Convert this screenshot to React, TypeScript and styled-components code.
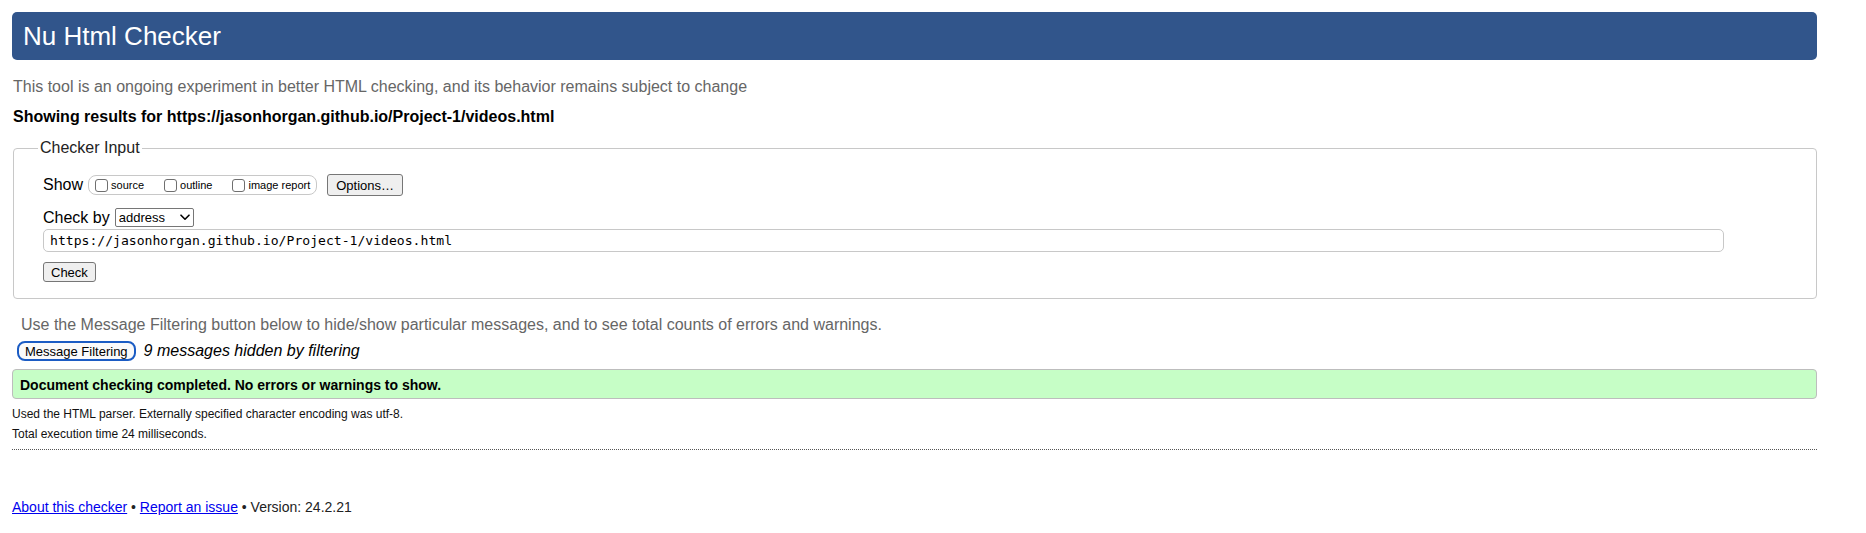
import React from "react";
import styled, { createGlobalStyle } from "styled-components";

const GlobalStyle = createGlobalStyle`
    html, body {
        margin: 0;
        padding: 0;
        background: #ffffff;
    }
    body {
        font-family: "Liberation Sans", Arial, Helvetica, sans-serif;
        color: #000;
    }
`;

const Page = styled.div`
    margin: 0 49px 0 12px;
    padding-top: 12px;
`;

const Title = styled.h1`
    margin: 0;
    height: 48px;
    padding: 0 11px;
    background-color: #31558b;
    color: #ffffff;
    border-radius: 5px;
    font-size: 26px;
    font-weight: normal;
    line-height: 48px;
`;

const Intro = styled.p`
    margin: 17px 0 0 1px;
    font-size: 16px;
    line-height: 20px;
    color: #666666;
`;

const Results = styled.p`
    margin: 10px 0 0 1px;
    font-size: 16px;
    font-weight: bold;
    line-height: 20px;
`;

const InputSet = styled.fieldset`
    margin: 12px 0 0 1px;
    padding: 0 0 16px 29px;
    border: 1px solid #c8c8c8;
    border-radius: 4px;
    min-width: 0;
`;

const Legend = styled.legend`
    margin-left: -5px;
    padding: 0 2px;
    font-size: 16px;
    line-height: 18px;
    color: #222222;
`;

const Row = styled.div<{ $top: number; $height: number }>`
    display: flex;
    align-items: center;
    margin-top: ${(p) => p.$top}px;
    height: ${(p) => p.$height}px;
`;

const Label = styled.span`
    font-size: 16px;
    margin-right: 5px;
`;

const OptionGroup = styled.div`
    display: flex;
    align-items: center;
    gap: 20px;
    height: 18px;
    padding: 0 6px;
    border: 1px solid #c8c8c8;
    border-radius: 8px;
    margin-right: 10px;
`;

const Option = styled.label`
    display: flex;
    align-items: center;
    gap: 3px;
    font-size: 11px;
    color: #000;
`;

const Box = styled.input`
    appearance: none;
    margin: 0;
    width: 13px;
    height: 13px;
    border: 1px solid #6f6f6f;
    border-radius: 3px;
    background: #fff;
    box-sizing: border-box;
`;

const Button = styled.button<{ $height: number; $pad: number }>`
    height: ${(p) => p.$height}px;
    padding: 0 ${(p) => p.$pad}px;
    font-family: "Liberation Sans", Arial, sans-serif;
    font-size: 13px;
    color: #000;
    background: #efefef;
    border: 1px solid #767676;
    border-radius: 3px;
`;

const SelectWrap = styled.div`
    position: relative;
    width: 79px;
    height: 19px;
`;

const Select = styled.select`
    appearance: none;
    width: 100%;
    height: 100%;
    margin: 0;
    padding: 0 0 0 3px;
    font-family: "Liberation Sans", Arial, sans-serif;
    font-size: 13px;
    color: #000;
    background: #fff;
    border: 1px solid #767676;
    border-radius: 2px;
`;

const Chevron = styled.svg`
    position: absolute;
    right: 4px;
    top: 6px;
    pointer-events: none;
`;

const UrlInput = styled.input`
    display: block;
    box-sizing: border-box;
    width: 1681px;
    height: 23px;
    margin: 2px 0 0;
    padding: 0 6px;
    font-family: "DejaVu Sans Mono", "Liberation Mono", monospace;
    font-size: 13.1px;
    color: #000;
    border: 1px solid #c8c8c8;
    border-radius: 5px;
`;

const CheckRow = styled.div`
    margin-top: 10px;
`;

const Hint = styled.p`
    margin: 16px 0 0 9px;
    font-size: 16px;
    line-height: 20px;
    color: #666666;
`;

const FilterRow = styled.div`
    display: flex;
    align-items: center;
    gap: 8px;
    margin: 6px 0 0 5px;
    height: 20px;
`;

const FilterButton = styled.button`
    box-sizing: border-box;
    height: 20px;
    padding: 0 6px;
    font-family: "Liberation Sans", Arial, sans-serif;
    font-size: 13px;
    color: #000;
    background: #fafafa;
    border: 2px solid #1b5cc4;
    border-radius: 8px;
`;

const Hidden = styled.em`
    font-size: 16px;
`;

const Success = styled.div`
    margin-top: 8px;
    height: 26px;
    padding: 2px 7px 0;
    background-color: #c6fec6;
    border: 1px solid #bdbdbd;
    border-radius: 4px;
    font-size: 14px;
    font-weight: bold;
    line-height: 26px;
`;

const Details = styled.div`
    margin-top: 5px;
    font-size: 12px;
    line-height: 20px;
    color: #111;
`;

const Rule = styled.div`
    margin-top: 5px;
    border-top: 1px dotted #555555;
`;

const Footer = styled.div`
    margin-top: 47px;
    font-size: 14px;
    line-height: 20px;
    color: #222;

    a {
        color: #0000ee;
        text-decoration: underline;
    }
`;

const App = () => {
    const url = "https://jasonhorgan.github.io/Project-1/videos.html";

    return (
        <>
            <GlobalStyle />
            <Page>
                <Title>Nu Html Checker</Title>
                <Intro>This tool is an ongoing experiment in better HTML checking, and its behavior remains subject to change</Intro>
                <Results>Showing results for {url}</Results>

                <InputSet>
                    <Legend>Checker Input</Legend>
                    <Row $top={17} $height={22}>
                        <Label>Show</Label>
                        <OptionGroup>
                            <Option><Box type="checkbox" />source</Option>
                            <Option><Box type="checkbox" />outline</Option>
                            <Option><Box type="checkbox" />image report</Option>
                        </OptionGroup>
                        <Button $height={22} $pad={8}>Options…</Button>
                    </Row>
                    <Row $top={12} $height={19}>
                        <Label>Check by</Label>
                        <SelectWrap>
                            <Select defaultValue="address">
                                <option value="address">address</option>
                                <option value="file">file upload</option>
                                <option value="text">text input</option>
                            </Select>
                            <Chevron width="10" height="7" viewBox="0 0 10 7">
                                <path d="M1 1.2 L5 5.2 L9 1.2" fill="none" stroke="#000" strokeWidth="1.6" strokeLinecap="round" strokeLinejoin="round" />
                            </Chevron>
                        </SelectWrap>
                    </Row>
                    <UrlInput type="url" defaultValue={url} />
                    <CheckRow>
                        <Button $height={20} $pad={7}>Check</Button>
                    </CheckRow>
                </InputSet>

                <Hint>Use the Message Filtering button below to hide/show particular messages, and to see total counts of errors and warnings.</Hint>
                <FilterRow>
                    <FilterButton>Message Filtering</FilterButton>
                    <Hidden>9 messages hidden by filtering</Hidden>
                </FilterRow>

                <Success>Document checking completed. No errors or warnings to show.</Success>

                <Details>
                    <div>Used the HTML parser. Externally specified character encoding was utf-8.</div>
                    <div>Total execution time 24 milliseconds.</div>
                </Details>
                <Rule />

                <Footer>
                    <a href="#about">About this checker</a> • <a href="#issue">Report an issue</a> • Version: 24.2.21
                </Footer>
            </Page>
        </>
    );
};

export default App;
